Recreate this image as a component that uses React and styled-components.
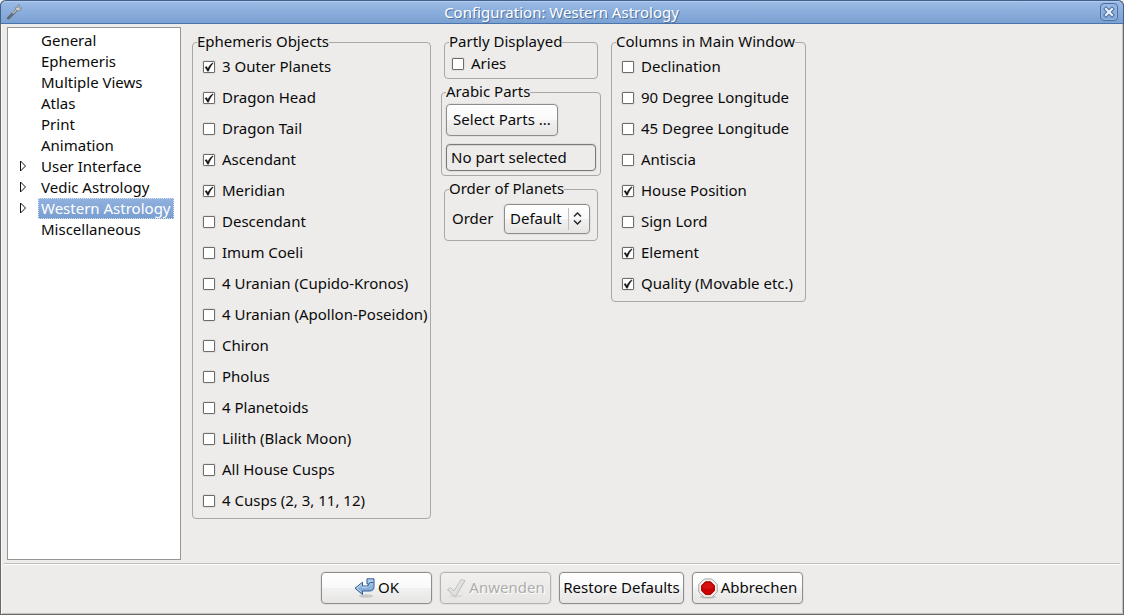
import React, { useState } from 'react';
import styled, { createGlobalStyle, css } from 'styled-components';

const GlobalStyle = createGlobalStyle`
  *, *::before, *::after { box-sizing: border-box; }
  body {
    margin: 0;
    background: #edeceb;
    color: #0a0a0a;
    font: 15px/18px "Noto Sans", "Open Sans", sans-serif;
  }
  button, input, select { font: inherit; color: inherit; }
`;

const Window = styled.div`
  display: flex;
  flex-direction: column;
  min-height: 100vh;
  border: 1px solid #6a6a6a;
  border-top: 0;
  border-radius: 6px 6px 0 0;
  background: #edeceb;
  box-shadow: inset 1px 0 #f8f8f7, inset -1px -1px #c3c2c0;
`;

const TitleBar = styled.header`
  display: grid;
  grid-template-columns: 24px 1fr 24px;
  align-items: center;
  height: 24px;
  margin: 0 -1px;
  padding: 0 5px 0 4px;
  border: 1px solid #41608c;
  border-bottom-color: #4c74ac;
  border-radius: 6px 6px 0 0;
  background: linear-gradient(#9dbbe6, #8bafdd 45%, #7ba1d2);
  box-shadow: inset 0 1px #b5cbea;
`;

const Title = styled.h1`
  margin: 0;
  font-size: 15px;
  font-weight: 400;
  text-align: center;
  color: #fff;
  text-shadow: 1px 1px #50709c;
`;

const CloseButton = styled.button`
  display: grid;
  place-items: center;
  justify-self: end;
  width: 18px;
  height: 18px;
  padding: 0;
  border: 1px solid #4a6fa3;
  border-radius: 4px;
  background: linear-gradient(#9cbae3, #7da3d4);
  box-shadow: inset 0 0 0 1px #9ab7df;
`;

const Body = styled.main`
  flex: 1;
  display: flex;
  align-items: stretch;
  padding: 3px 6px;
`;

const Tree = styled.ul`
  flex: none;
  width: 174px;
  margin: 0;
  padding: 2px 0;
  list-style: none;
  border: 1px solid #979593;
  background: #fff;
`;

const TreeRow = styled.li`
  display: grid;
  grid-template-columns: 30px auto;
  justify-content: start;
  align-items: center;
  height: 21px;
`;

const Expander = styled.button`
  grid-column: 1;
  display: flex;
  justify-content: center;
  padding: 0 0 2px;
  border: 0;
  background: none;
`;

const TreeItem = styled.button`
  grid-column: 2;
  height: 21px;
  padding: 0 2px 2px;
  border: 1px solid transparent;
  background: none;
  line-height: 16px;
  white-space: nowrap;
  ${p => p.$selected && css`
    color: #fff;
    border: 1px dotted #d5e2f5;
    background: linear-gradient(#92b2df, #779dcf) border-box;
  `}
`;

const Panels = styled.div`
  display: flex;
  align-items: flex-start;
  gap: 10px;
  padding: 6px 11px;
`;

const MiddleColumn = styled.div`
  display: flex;
  flex-direction: column;
  gap: 4px;
`;

const Group = styled.fieldset`
  min-width: 0;
  width: ${p => p.$width}px;
  margin: 0 ${p => (p.$inset ? 3 : 0)}px;
  padding: ${p => p.$padding || '0 4px 2px'};
  border: 1px solid #aaa8a5;
  border-radius: 4px;
`;

const Legend = styled.legend`
  padding: 0;
  height: 18px;
  line-height: 16px;
  white-space: nowrap;
`;

const Text = styled.span`
  line-height: 16px;
  padding-bottom: 2px;
`;

const CheckLabel = styled.label`
  display: flex;
  align-items: center;
  gap: 7px;
  height: ${p => (p.$compact ? 25 : 31)}px;
  padding-left: ${p => (p.$compact ? 3 : 6)}px;
  white-space: nowrap;
`;

const TickSlot = styled.span`
  display: grid;
  flex: none;
  width: 12px;
  height: 13px;
  padding-top: 1px;
  & > * { grid-area: 1 / 1; }
  input:not(:checked) + svg { display: none; }
`;

const TickBox = styled.input`
  appearance: none;
  width: 12px;
  height: 12px;
  margin: 0;
  border: 1px solid #6e6c6a;
  border-radius: 1px;
  background: #fff;
  box-shadow: 0 0 0 1px #e0dfdd;
`;

const TickMark = styled.svg`
  pointer-events: none;
`;

const raised = css`
  border: 1px solid #8f8d8a;
  border-radius: 4px;
  background: linear-gradient(#fff, #f9f9f9 50%, #f2f1f1 51%, #e6e5e4);
  box-shadow: 0 0 0 1px #e2e1e0;
`;

const Button = styled.button`
  ${raised}
  display: flex;
  align-items: center;
  justify-content: center;
  gap: 3px;
  width: ${p => p.$width}px;
  height: 32px;
  padding: 0;
  white-space: nowrap;
  &:disabled {
    color: #aeacaa;
    border-color: #b5b3b1;
    background: linear-gradient(#f1f0ef, #e6e5e4);
    text-shadow: 1px 1px #fff;
  }
`;

const PartsStack = styled.div`
  display: flex;
  flex-direction: column;
  gap: 8px;
`;

const PartField = styled.input`
  width: 100%;
  height: 27px;
  padding: 0 4px 2px;
  border: 1px solid #7b7977;
  border-radius: 4px;
  background: #edeceb;
  box-shadow: inset 0 1px #d4d3d1, 0 0 0 1px #e0dfde;
`;

const OrderRow = styled.div`
  display: flex;
  align-items: center;
  justify-content: space-between;
  padding-left: 3px;
`;

const SelectSlot = styled.span`
  display: grid;
  width: 86px;
  & > * { grid-area: 1 / 1; }
`;

const Select = styled.select`
  ${raised}
  appearance: none;
  width: 100%;
  height: 30px;
  padding: 0 5px 2px;
`;

const SelectArrows = styled.svg`
  justify-self: end;
  align-self: center;
  margin-right: 3px;
  pointer-events: none;
`;

const Footer = styled.footer`
  display: flex;
  justify-content: center;
  gap: 8px;
  margin: 0 3px 1px;
  padding: 8px 0 9px;
  border-top: 1px solid #bfbdbb;
  box-shadow: inset 0 1px #fff;
`;

const treeItems = [
  ['General'], ['Ephemeris'], ['Multiple Views'], ['Atlas'], ['Print'], ['Animation'],
  ['User Interface', true], ['Vedic Astrology', true], ['Western Astrology', true], ['Miscellaneous'],
];

const ephemerisObjects = [
  ['3 Outer Planets', true], ['Dragon Head', true], ['Dragon Tail'], ['Ascendant', true],
  ['Meridian', true], ['Descendant'], ['Imum Coeli'], ['4 Uranian (Cupido-Kronos)'],
  ['4 Uranian (Apollon-Poseidon)'], ['Chiron'], ['Pholus'], ['4 Planetoids'],
  ['Lilith (Black Moon)'], ['All House Cusps'], ['4 Cusps (2, 3, 11, 12)'],
];

const columns = [
  ['Declination'], ['90 Degree Longitude'], ['45 Degree Longitude'], ['Antiscia'],
  ['House Position', true], ['Sign Lord'], ['Element', true], ['Quality (Movable etc.)', true],
];

function Check({ label, checked = false, compact }) {
  return (
    <CheckLabel $compact={compact}>
      <TickSlot>
        <TickBox type="checkbox" defaultChecked={checked} />
        <TickMark width="12" height="12" viewBox="0 0 12 12" aria-hidden="true">
          <path d="M2 6.2 L3.6 5.6 L4.9 7.8 C5.9 5.4 7.4 3.2 9.8 1.8 L10.1 2.3 C8.1 4.5 6.6 7.2 5.5 10.2 L4.5 10.2 C3.9 8.7 3.1 7.4 2 6.2 Z" fill="#111" stroke="#111" strokeWidth=".4" />
        </TickMark>
      </TickSlot>
      <Text>{label}</Text>
    </CheckLabel>
  );
}

const WrenchIcon = () => (
  <svg width="18" height="18" viewBox="0 0 18 18" aria-hidden="true">
    <path d="M3.4 15.2 L11.5 7.2" stroke="#4e5358" strokeWidth="2.6" strokeLinecap="round" />
    <path d="M7.5 10.7 L12.5 6" stroke="#b4b7b6" strokeWidth="1.8" />
    <path d="M3.6 14.9 L8 10.6" stroke="#8b8c89" strokeWidth="1" strokeLinecap="round" />
    <path d="M10.2 4.8 L11 7 L13 7.8 L16.2 6.8 L16.6 4.6 L14.8 5.6 L13.8 4.6 L14.8 2 L13 2 L12.4 4.4 Z" fill="#cfd1cf" stroke="#777b7e" strokeWidth=".7" />
  </svg>
);

const CloseIcon = () => (
  <svg width="12" height="12" viewBox="0 0 12 12" aria-hidden="true">
    <path d="M3 3 L9 9 M9 3 L3 9" stroke="#456a9f" strokeWidth="4" strokeLinecap="square" />
    <path d="M3 3 L9 9 M9 3 L3 9" stroke="#edf3fb" strokeWidth="2.2" strokeLinecap="square" />
  </svg>
);

const ExpanderIcon = () => (
  <svg width="8" height="12" viewBox="0 0 8 12" aria-hidden="true">
    <path d="M1.5 1 V11 L6.5 6 Z" fill="#fff" stroke="#111" />
  </svg>
);

const OkIcon = () => (
  <svg width="21" height="20" viewBox="0 0 21 20" aria-hidden="true">
    <defs>
      <linearGradient id="okBlue" x1="0" y1="0" x2="0" y2="1">
        <stop offset="0" stopColor="#b9d3ee" />
        <stop offset="1" stopColor="#6d9acb" />
      </linearGradient>
    </defs>
    <ellipse cx="12" cy="18" rx="7" ry="1.7" fill="#000" opacity=".14" />
    <path d="M13 .8 H20 V8.5 Q20 13 15.5 13 H8.5 V16.5 L1 10.2 L8.5 4.2 V8 H12.5 Q14.8 8 14.8 6 H13 Z" fill="url(#okBlue)" stroke="#315f96" strokeLinejoin="round" />
    <path d="M14.8 6 L16.3 4.5 H19.5" fill="none" stroke="#315f96" />
    <path d="M7.5 6.3 L2.8 10.2 L7.5 14.2 M8 9.1 H13.4" fill="none" stroke="#d7e6f5" strokeWidth=".8" />
  </svg>
);

const ApplyIcon = () => (
  <svg width="20" height="20" viewBox="0 0 20 20" aria-hidden="true">
    <ellipse cx="10" cy="18" rx="7" ry="1.5" fill="#000" opacity=".06" />
    <path d="M1.5 11.5 L4.5 9.8 L8 13 L15.2 1.5 L19 2.7 L9.8 18.2 L8 18.2 Z" fill="#dddfda" stroke="#bdbeba" strokeLinejoin="round" />
    <path d="M3 11.8 L4.5 11 L8.3 14.7 L15.7 2.8 L17.4 3.3" fill="none" stroke="#edeeeb" strokeWidth=".8" />
  </svg>
);

const StopIcon = () => (
  <svg width="20" height="21" viewBox="0 0 20 21" aria-hidden="true">
    <ellipse cx="10" cy="19" rx="8" ry="1.6" fill="#000" opacity=".16" />
    <path d="M6.2 1 H13.8 L19.2 6.4 V14 L13.8 19.3 H6.2 L.8 14 V6.4 Z" fill="#f2f2f0" stroke="#a5a7a2" />
    <path d="M7.4 3.8 H12.6 L16.4 7.6 V12.8 L12.6 16.6 H7.4 L3.6 12.8 V7.6 Z" fill="#cc0000" stroke="#a40000" />
    <path d="M7.8 4.8 H12.2 L15.4 8 V10 Q10 12 4.6 10 V8 Z" fill="#e02626" opacity=".45" />
  </svg>
);

export default function App() {
  const [selected, setSelected] = useState('Western Astrology');
  return (
    <>
      <GlobalStyle />
      <Window>
        <TitleBar>
          <WrenchIcon />
          <Title>Configuration: Western Astrology</Title>
          <CloseButton aria-label="Close"><CloseIcon /></CloseButton>
        </TitleBar>
        <Body>
          <Tree>
            {treeItems.map(([name, expandable]) => (
              <TreeRow key={name}>
                {expandable && <Expander aria-label={`Expand ${name}`}><ExpanderIcon /></Expander>}
                <TreeItem $selected={name === selected} onClick={() => setSelected(name)}>{name}</TreeItem>
              </TreeRow>
            ))}
          </Tree>
          <Panels>
            <Group $width={239}>
              <Legend>Ephemeris Objects</Legend>
              {ephemerisObjects.map(([label, on]) => <Check key={label} label={label} checked={on} />)}
            </Group>
            <MiddleColumn>
              <Group $width={154} $inset>
                <Legend>Partly Displayed</Legend>
                <Check label="Aries" compact />
              </Group>
              <Group $width={160} $padding="3px 4px 4px">
                <Legend>Arabic Parts</Legend>
                <PartsStack>
                  <Button $width={112}><Text>Select Parts ...</Text></Button>
                  <PartField readOnly aria-label="Selected part" defaultValue="No part selected" />
                </PartsStack>
              </Group>
              <Group $width={154} $inset $padding="6px 7px 6px 4px">
                <Legend>Order of Planets</Legend>
                <OrderRow>
                  <Text as="label" htmlFor="order">Order</Text>
                  <SelectSlot>
                    <Select id="order"><option>Default</option></Select>
                    <SelectArrows width="20" height="22" viewBox="0 0 20 22" aria-hidden="true">
                      <path d="M1.5 0 V22" stroke="#c2c0be" />
                      <path d="M7 8.5 L10.5 5 L14 8.5 M7 12.5 L10.5 16 L14 12.5" fill="none" stroke="#222" strokeWidth="1.4" />
                    </SelectArrows>
                  </SelectSlot>
                </OrderRow>
              </Group>
            </MiddleColumn>
            <Group $width={195}>
              <Legend>Columns in Main Window</Legend>
              {columns.map(([label, on]) => <Check key={label} label={label} checked={on} />)}
            </Group>
          </Panels>
        </Body>
        <Footer>
          <Button $width={111}><OkIcon /><Text>OK</Text></Button>
          <Button $width={111} disabled><ApplyIcon /><Text>Anwenden</Text></Button>
          <Button $width={125}><Text>Restore Defaults</Text></Button>
          <Button $width={111}><StopIcon /><Text>Abbrechen</Text></Button>
        </Footer>
      </Window>
    </>
  );
}
